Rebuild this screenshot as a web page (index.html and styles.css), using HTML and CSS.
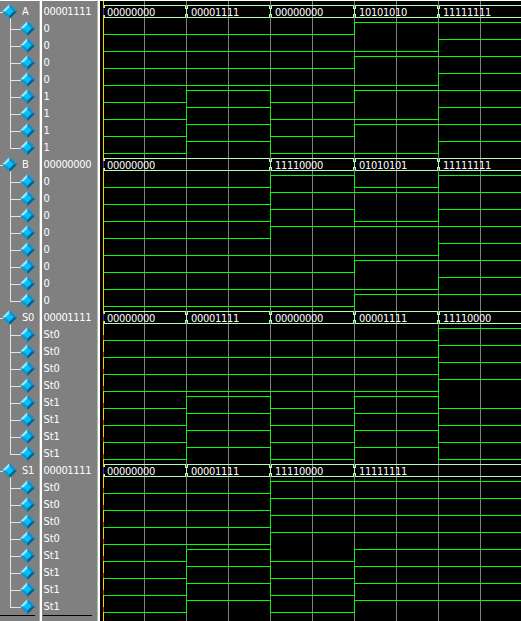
FILE: index.html
```
<!DOCTYPE html>
<html lang="en">
<head>
<meta charset="utf-8">
<title>Wave</title>
<link rel="stylesheet" href="styles.css">
</head>
<body>
<svg class="defs" aria-hidden="true">
  <symbol id="gem" viewBox="0 0 15 15">
    <path d="M7.5 0L15 7.5L7.5 15L0 7.5Z" fill="#1094d2"/>
    <path d="M7.5 0L0 7.5L3.7 7.5L7.5 3.7Z" fill="#a2e4fa"/>
    <path d="M7.5 0L15 7.5L11.3 7.5L7.5 3.7Z" fill="#1090d2"/>
    <path d="M15 7.5L7.5 15L7.5 11.3L11.3 7.5Z" fill="#045f8c"/>
    <path d="M7.5 3.5L11.5 7.5L7.5 11.5L3.5 7.5Z" fill="#00c4f6"/>
  </symbol>
</svg>
<main class="viewer">
  <section class="names" id="names"></section>
  <section class="values" id="values"></section>
  <section class="waves" id="waves"></section>
</main>
<script src="wave.js"></script>
</body>
</html>
```
FILE: styles.css
```
* { box-sizing: border-box; }
body {
  margin: 0;
  width: 521px;
  height: 621px;
  overflow: hidden;
  background: #808080;
  font: 11px/17px "DejaVu Sans Condensed", "DejaVu Sans", sans-serif;
  font-stretch: condensed;
  letter-spacing: -0.3px;
  color: #fff;
}
.defs { position: absolute; width: 0; height: 0; }
.viewer {
  display: grid;
  grid-template-columns: 42px 58px 421px;
  height: 621px;
}
.names, .values {
  border-top: 1px solid #fff;
  padding-top: 2px;
  background: #808080;
}
.names { border-right: 2px solid #fff; box-shadow: inset -1px 0 #a8a8a8; }
.values { border-right: 2px solid #fff; box-shadow: inset -1px 0 #b4b4b4; }
.row { display: flex; height: 17px; }
.tree { display: block; flex: none; }
.tree path { stroke: #e4e4e4; fill: none; }
.label { padding-left: 5px; }
.value { padding-left: 1.4px; white-space: nowrap; }
.value.state { letter-spacing: 0; }
.end { height: 1px; background: #000; }
.names .end { width: 35px; }
.values .end { width: 49px; margin-left: 1px; }
.waves {
  border-top: 1px solid #fff;
  background: #000;
}
.lane { display: block; shape-rendering: crispEdges; }
.lane text { fill: #fff; font-size: 11px; }
.grid { fill: #808080; }
.bit { fill: none; stroke: #0f0; }
.bus { fill: none; stroke: #b4ffb4; }
.cursor { fill: #ffd200; }
.cursor-mark { fill: #5028c8; }
.cursor-hit { fill: #ee2020; }
```
FILE: wave.js
```
const edges = [3, 86, 170, 254, 338, 421];
const signals = [
  { name: 'A', now: '00001111', prefix: '', data: ['00000000', '00001111', '00000000', '10101010', '11111111'] },
  { name: 'B', now: '00000000', prefix: '', data: ['00000000', '00000000', '11110000', '01010101', '11111111'] },
  { name: 'S0', now: '00001111', prefix: 'St', data: ['00000000', '00001111', '00000000', '00001111', '11110000'] },
  { name: 'S1', now: '00001111', prefix: 'St', data: ['00000000', '00001111', '11110000', '11111111', '11111111'] }
];

function lane(content, overlay = '', height = 17) {
  const grid = [44, 86, 128, 170, 212, 254, 296, 338, 380]
    .map(x => `<rect class="grid" x="${x}" y="0" width="1" height="${height}"/>`).join('');
  const cursor = `<rect class="cursor" x="3" y="0" width="1" height="${height}"/>`;
  return `<svg class="lane" width="421" height="${height}">${grid}${content}${cursor}${overlay}</svg>`;
}

function busLane(data) {
  let shapes = '<path class="bus" d="M4 2.5H421M4 14.5H421"/>';
  let labels = '';
  data.forEach((v, i) => {
    if (i && data[i - 1] === v) return;
    const x = edges[i];
    if (i) {
      shapes += `<path class="bus" d="M${x + .5} 5V12M${x - .5} 2V6M${x + 1.5} 2V6M${x - .5} 11V15M${x + 1.5} 11V15"/>` +
        `<path class="grid" d="M${x} 2h1v3h-1zM${x} 12h1v3h-1z"/>`;
    } else {
      shapes += '<path class="bus" d="M4.5 2V5M4.5 12V15"/>';
    }
    labels += `<text x="${x + (i ? 5 : 4)}" y="13">${v}</text>`;
  });
  return lane(shapes + labels, '<rect class="cursor-mark" x="3" y="5" width="1" height="7"/>');
}

function bitLane(data, bit, state) {
  const level = i => data[i][bit] === '1' ? 2.5 : 14.5;
  let d = `M3 ${level(0)}`;
  for (let i = 1; i < data.length; i++) {
    if (level(i) !== level(i - 1)) d += `H${edges[i] + .5}V${level(i)}`;
  }
  const hit = state ? '<rect class="cursor-hit" x="3" y="9" width="1" height="5"/>' : '';
  return lane(`<path class="bit" d="${d}H421"/>`, hit);
}

let names = '', values = '', waves = lane('', '', 2);
for (const s of signals) {
  names += `<div class="row"><svg class="tree" width="17" height="17"><path d="M0 9.5H3M10.5 12V17"/><use href="#gem" x="2" y="1" width="15" height="15"/></svg><span class="label">${s.name}</span></div>`;
  values += `<div class="row value">${s.now}</div>`;
  waves += busLane(s.data);
  for (let b = 0; b < 8; b++) {
    names += `<div class="row"><svg class="tree" width="35" height="17"><path d="M10.5 0V${b === 7 ? 10 : 17}M10 9.5H21"/><use href="#gem" x="20" y="1" width="15" height="15"/></svg></div>`;
    values += `<div class="row value${s.prefix ? ' state' : ''}">${s.prefix}${s.now[b]}</div>`;
    waves += bitLane(s.data, b, s.prefix);
  }
}
document.getElementById('names').innerHTML = names + '<div class="end"></div>';
document.getElementById('values').innerHTML = values + '<div class="end"></div>';
document.getElementById('waves').innerHTML = waves + lane('');
```
